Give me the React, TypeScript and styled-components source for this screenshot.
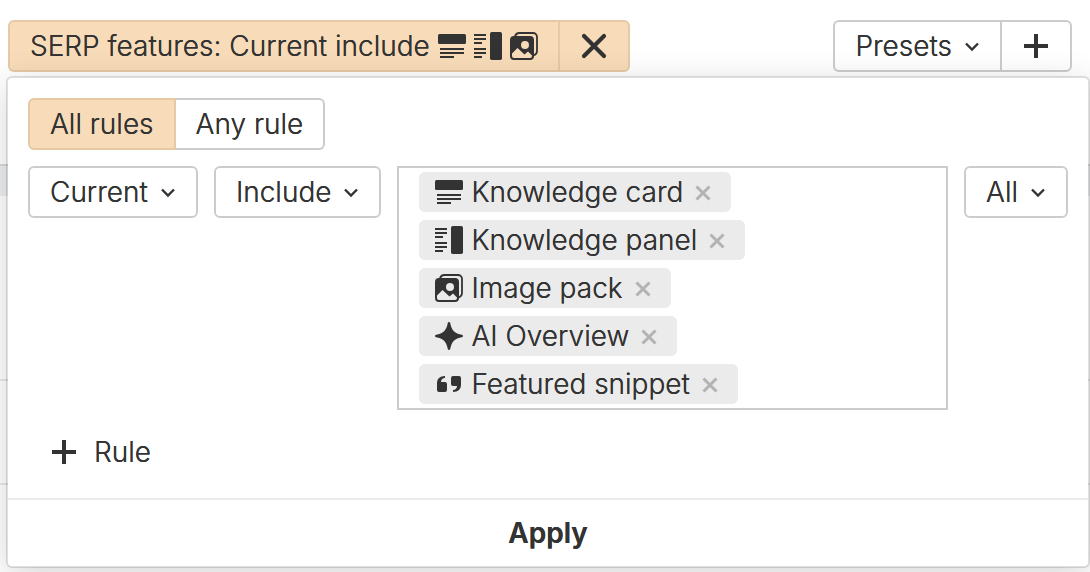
import React, { useState } from "react";
import styled, { createGlobalStyle, css } from "styled-components";

const ink = "#333333";
const line = "#cccccc";
const peach = "#f8dcb9";
const peachLine = "#e6c9a5";

const GlobalStyle = createGlobalStyle`
  *, *::before, *::after { box-sizing: border-box; }
  body {
    margin: 0;
    background: #ffffff;
    color: ${ink};
    font-family: Inter, "Liberation Sans", sans-serif;
    font-size: 28px;
    font-weight: 300;
    line-height: 36px;
    text-shadow: 0 0 0 ${ink};
  }
  button, select, input { font: inherit; color: inherit; text-shadow: inherit; }
  button, select { cursor: pointer; }
`;

const Page = styled.div`
  position: relative;
  display: flex;
  flex-direction: column;
  min-height: 100vh;
  overflow: hidden;
`;

const Toolbar = styled.header`
  display: flex;
  justify-content: space-between;
  padding: 20px 18px 0 8px;
`;

const ButtonGroup = styled.div`
  display: flex;
`;

const Button = styled.button<{ $active?: boolean }>`
  display: flex;
  align-items: center;
  gap: 8px;
  height: 52px;
  padding: 0 20px;
  border: 2px solid ${(p) => (p.$active ? peachLine : line)};
  border-radius: 6px;
  background: ${(p) => (p.$active ? peach : "#ffffff")};
  white-space: nowrap;

  ${ButtonGroup} > &:not(:last-child) {
    border-right: 0;
    border-top-right-radius: 0;
    border-bottom-right-radius: 0;
  }
  ${ButtonGroup} > &:last-child {
    border-top-left-radius: 0;
    border-bottom-left-radius: 0;
  }
`;

const MenuButton = styled(Button)`
  gap: 12px;
`;

const Results = styled.div`
  display: flex;
  flex-direction: column;
  flex: 1;
  margin-top: 92px;
`;

const ResultsHead = styled.div`
  height: 32px;
  border-top: 2px solid #d8d8d8;
  background: #eceef0;
`;

const ResultsRow = styled.div<{ $tall?: boolean }>`
  height: ${(p) => (p.$tall ? 185 : 104)}px;
  border-bottom: 2px solid #e8e8e8;
`;

const Panel = styled.form`
  position: absolute;
  top: 76px;
  left: 6px;
  right: 0;
  border: 2px solid rgba(0, 0, 0, 0.12);
  border-radius: 6px;
  background: #ffffff;
  background-clip: padding-box;
  box-shadow: 0 8px 36px rgba(0, 0, 0, 0.16);
`;

const PanelBody = styled.div`
  display: flex;
  flex-direction: column;
  align-items: flex-start;
  gap: 16px;
  padding: 20px;
`;

const Segments = styled.fieldset`
  display: flex;
  margin: 0;
  padding: 0;
  border: 0;
`;

const Segment = styled.label<{ $active: boolean }>`
  display: flex;
  align-items: center;
  height: 52px;
  padding: 0 20px;
  border: 2px solid ${(p) => (p.$active ? peachLine : line)};
  background: ${(p) => (p.$active ? peach : "#ffffff")};
  cursor: pointer;

  &:first-of-type {
    border-radius: 6px 0 0 6px;
    ${(p) => !p.$active && css`border-right: 0;`}
  }
  &:last-of-type {
    border-radius: 0 6px 6px 0;
    ${(p) => !p.$active && css`border-left: 0;`}
  }
`;

const HiddenRadio = styled.input`
  position: absolute;
  width: 1px;
  height: 1px;
  margin: 0;
  opacity: 0;
`;

const RuleRow = styled.div`
  display: flex;
  align-items: flex-start;
  gap: 16px;
  width: 100%;
`;

const SelectBox = styled.div`
  position: relative;
  flex: none;

  svg {
    position: absolute;
    top: 18px;
    right: 22px;
    pointer-events: none;
  }
`;

const Select = styled.select`
  display: block;
  appearance: none;
  field-sizing: content;
  height: 52px;
  padding: 0 48px 0 20px;
  border: 2px solid ${line};
  border-radius: 6px;
  background: #ffffff;
`;

const TagBox = styled.ul`
  display: flex;
  flex: 1;
  flex-direction: column;
  align-items: flex-start;
  gap: 8px;
  margin: 0;
  padding: 4px 20px;
  border: 2px solid ${line};
  list-style: none;
`;

const Tag = styled.li`
  display: flex;
  align-items: center;
  height: 40px;
  padding: 0 20px 0 16px;
  border-radius: 6px;
  background: #ebebeb;
  white-space: nowrap;
`;

const TagLabel = styled.span`
  margin: 0 12px 0 8px;
`;

const RemoveButton = styled.button`
  display: flex;
  padding: 2px 0 0;
  border: 0;
  background: none;
  color: #b3b3b3;
`;

const AddRuleButton = styled.button`
  display: flex;
  align-items: center;
  gap: 16px;
  height: 52px;
  padding: 0 22px;
  border: 0;
  background: none;
`;

const ApplyButton = styled.button`
  display: block;
  width: 100%;
  height: 68px;
  padding: 0;
  border: 0;
  border-top: 2px solid #ebebeb;
  background: none;
  font-weight: 600;
`;

const Icon = ({ children }: { children: React.ReactNode }) => (
  <svg width="28" height="28" viewBox="0 0 28 28" fill="currentColor" aria-hidden="true">
    {children}
  </svg>
);

const CardIcon = () => (
  <Icon>
    <rect x="0" y="2" width="28" height="10" rx="1.5" />
    <path d="M2 16h24v2H2zM2 20h24v2H2zM2 24h14v2H2z" />
  </Icon>
);

const PanelIcon = () => (
  <Icon>
    <rect x="16" y="0" width="12" height="28" rx="1.8" />
    <path d="M0 2h12v2H0zM0 6h12v2H0zM0 10h8v2H0zM0 16h12v2H0zM0 20h12v2H0zM0 24h8v2H0z" />
  </Icon>
);

const ImagesIcon = () => (
  <Icon>
    <path
      d="M5 4.500C5.600 2.300 7 1 9.200 1H23a4 4 0 0 1 4 4v13.500c0 2.600-1.300 4.300-3.500 4.800"
      fill="none"
      stroke="currentColor"
      strokeWidth="1.800"
    />
    <path
      fillRule="evenodd"
      d="M4 4h16a4 4 0 0 1 4 4v16a4 4 0 0 1-4 4H4a4 4 0 0 1-4-4V8a4 4 0 0 1 4-4zM15 9a4 4 0 1 0 0 8a4 4 0 1 0 0-8zM2 21.500V24a2 2 0 0 0 2 2h16a2 2 0 0 0 2-2v-.5L18 19.500l-3.500 3L7.500 16z"
    />
  </Icon>
);

const SparkIcon = () => (
  <Icon>
    <path d="M14 0c1 0 1.200.8 1.500 2.200C16.800 8.300 19.700 11.200 25.800 12.500C27.200 12.800 28 13 28 14s-.8 1.200-2.200 1.500C19.700 16.800 16.800 19.700 15.500 25.800C15.200 27.200 15 28 14 28s-1.200-.8-1.500-2.200C11.200 19.700 8.300 16.800 2.200 15.500C.8 15.200 0 15 0 14s.8-1.200 2.200-1.500C8.300 11.200 11.200 8.300 12.500 2.200C12.800.8 13 0 14 0z" />
  </Icon>
);

const QuotesIcon = () => (
  <Icon>
    <path d="M10 6v2c-2.600.2-4 1.600-4 4h4a2 2 0 0 1 2 2v6a2 2 0 0 1-2 2H4a2 2 0 0 1-2-2v-6.500C2 8.800 4.800 6.200 10 6z" />
    <path d="M18 22v-2c2.600-.2 4-1.600 4-4h-4a2 2 0 0 1-2-2V8a2 2 0 0 1 2-2h6a2 2 0 0 1 2 2v6.500c0 4.700-2.800 7.300-8 7.500z" />
  </Icon>
);

const PlusIcon = () => (
  <Icon>
    <path d="M12 2h4v10h10v4H16v10h-4V16H2v-4h10z" />
  </Icon>
);

const CloseIcon = () => (
  <Icon>
    <path d="M4 4L24 24M24 4L4 24" stroke="currentColor" strokeWidth="4.200" strokeLinecap="round" />
  </Icon>
);

const ChevronIcon = () => (
  <svg width="16" height="16" viewBox="0 0 16 16" fill="none" aria-hidden="true">
    <path d="M2 5.500L8 11.500L14 5.500" stroke="currentColor" strokeWidth="2.400" />
  </svg>
);

const SmallCloseIcon = () => (
  <svg width="16" height="16" viewBox="0 0 16 16" fill="none" aria-hidden="true">
    <path d="M1.500 1.500L14.500 14.500M14.500 1.500L1.500 14.500" stroke="currentColor" strokeWidth="3" />
  </svg>
);

const features = [
  { name: "Knowledge card", icon: CardIcon },
  { name: "Knowledge panel", icon: PanelIcon },
  { name: "Image pack", icon: ImagesIcon },
  { name: "AI Overview", icon: SparkIcon },
  { name: "Featured snippet", icon: QuotesIcon },
];

const Dropdown = ({ label, options }: { label: string; options: string[] }) => (
  <SelectBox>
    <Select aria-label={label}>
      {options.map((option) => (
        <option key={option}>{option}</option>
      ))}
    </Select>
    <ChevronIcon />
  </SelectBox>
);

export default function App() {
  const [match, setMatch] = useState("All rules");
  const [tags, setTags] = useState(features);

  return (
    <Page>
      <GlobalStyle />
      <Toolbar>
        <ButtonGroup>
          <Button type="button" $active>
            SERP features: Current include
            <CardIcon />
            <PanelIcon />
            <ImagesIcon />
          </Button>
          <Button type="button" $active aria-label="Clear filter">
            <CloseIcon />
          </Button>
        </ButtonGroup>
        <ButtonGroup>
          <MenuButton type="button" aria-haspopup="menu">
            Presets
            <ChevronIcon />
          </MenuButton>
          <Button type="button" aria-label="Add preset">
            <PlusIcon />
          </Button>
        </ButtonGroup>
      </Toolbar>

      <Results>
        <ResultsHead />
        <ResultsRow $tall />
        <ResultsRow />
      </Results>

      <Panel onSubmit={(e) => e.preventDefault()}>
        <PanelBody>
          <Segments aria-label="Match">
            {["All rules", "Any rule"].map((name) => (
              <Segment key={name} $active={match === name}>
                <HiddenRadio
                  type="radio"
                  name="match"
                  checked={match === name}
                  onChange={() => setMatch(name)}
                />
                {name}
              </Segment>
            ))}
          </Segments>
          <RuleRow>
            <Dropdown label="Period" options={["Current", "Previous"]} />
            <Dropdown label="Condition" options={["Include", "Exclude"]} />
            <TagBox>
              {tags.map(({ name, icon: FeatureIcon }) => (
                <Tag key={name}>
                  <FeatureIcon />
                  <TagLabel>{name}</TagLabel>
                  <RemoveButton
                    type="button"
                    aria-label={`Remove ${name}`}
                    onClick={() => setTags(tags.filter((tag) => tag.name !== name))}
                  >
                    <SmallCloseIcon />
                  </RemoveButton>
                </Tag>
              ))}
            </TagBox>
            <Dropdown label="Quantity" options={["All", "Any"]} />
          </RuleRow>
          <AddRuleButton type="button">
            <PlusIcon />
            Rule
          </AddRuleButton>
        </PanelBody>
        <ApplyButton type="submit">Apply</ApplyButton>
      </Panel>
    </Page>
  );
}
